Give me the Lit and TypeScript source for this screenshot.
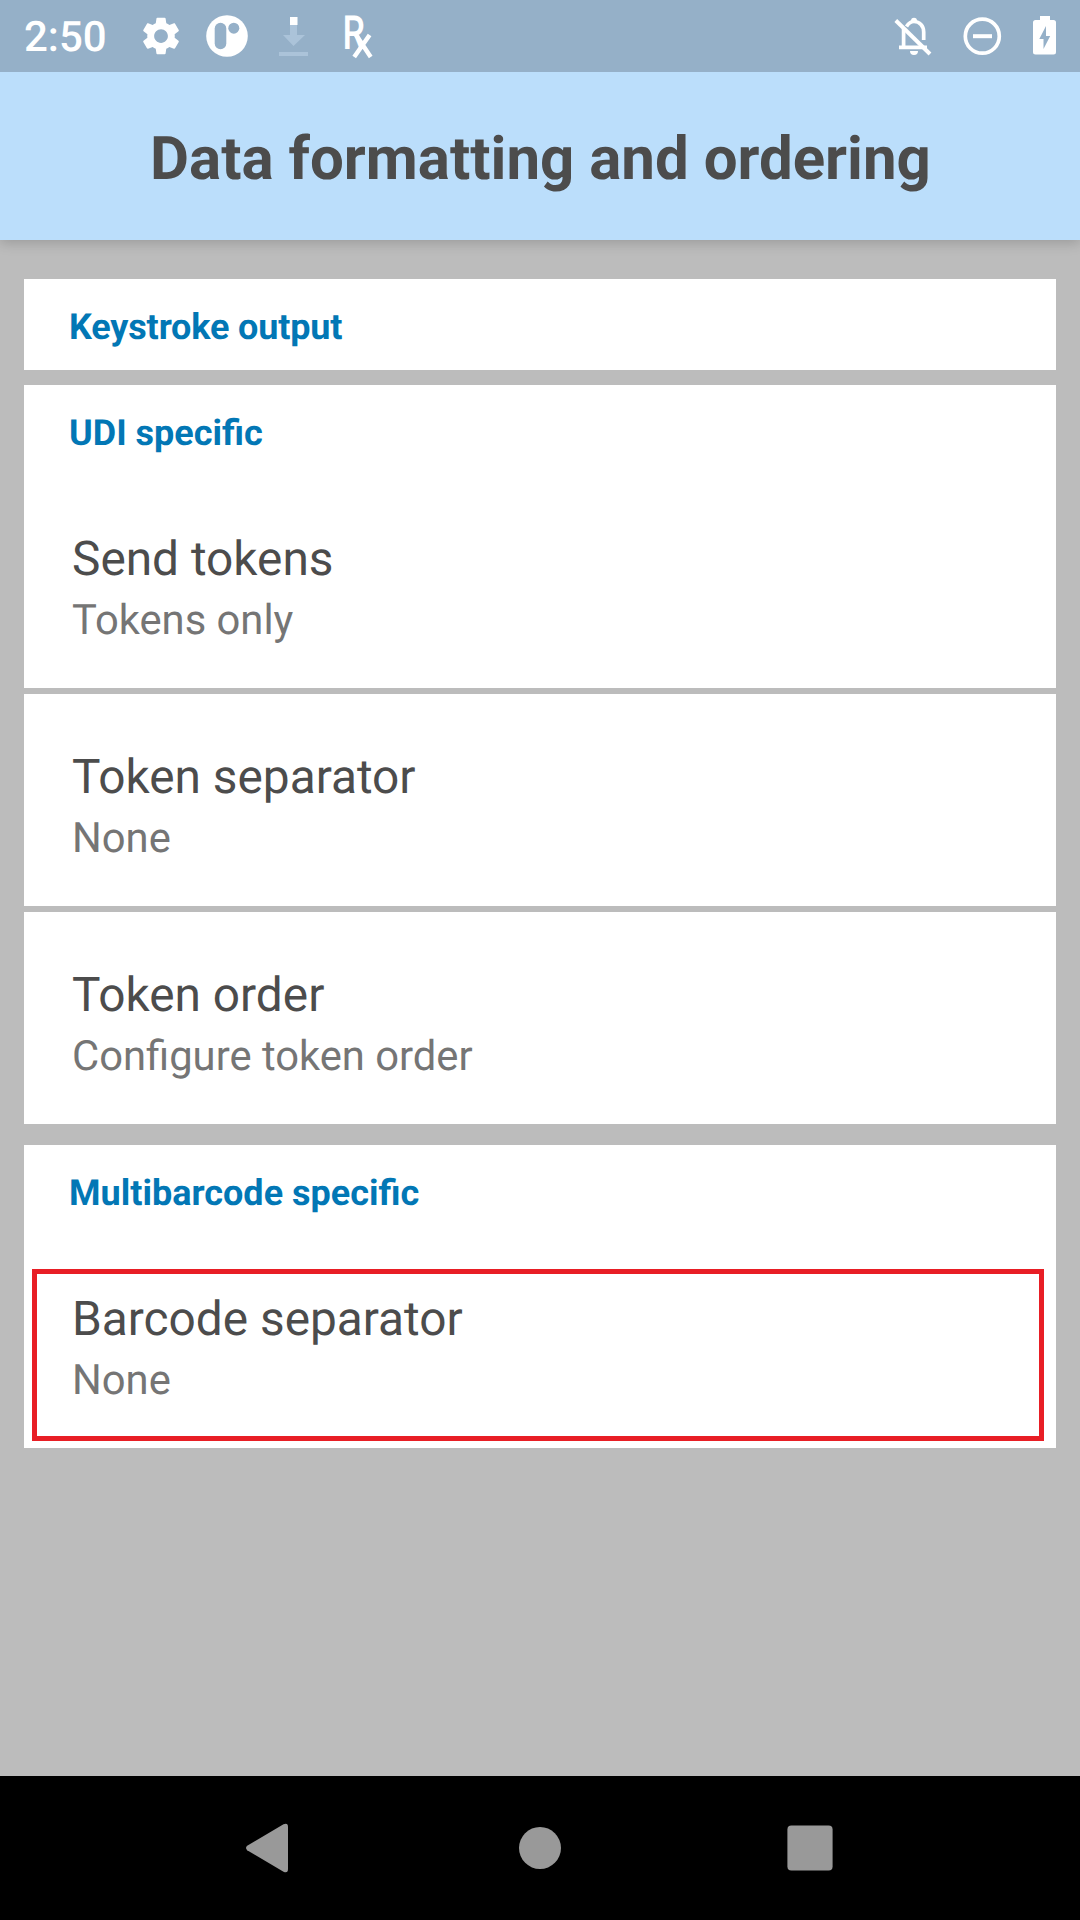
import { LitElement, html, css, svg } from "lit";
import { customElement, property } from "lit/decorators.js";

interface Item {
  title: string;
  value: string;
  marked?: boolean;
}

interface Section {
  heading: string;
  items: Item[];
}

const SECTIONS: Section[] = [
  { heading: "Keystroke output", items: [] },
  {
    heading: "UDI specific",
    items: [
      { title: "Send tokens", value: "Tokens only" },
      { title: "Token separator", value: "None" },
      { title: "Token order", value: "Configure token order" },
    ],
  },
  {
    heading: "Multibarcode specific",
    items: [{ title: "Barcode separator", value: "None", marked: true }],
  },
];

@customElement("status-bar")
export class StatusBar extends LitElement {
  static styles = css`
    :host {
      display: flex;
      align-items: center;
      justify-content: space-between;
      position: relative;
      z-index: 1;
      height: 72px;
      background: #95b0c8;
      color: #fff;
      font: 500 42px/50px Roboto, sans-serif;
    }
    .group {
      display: flex;
      align-items: center;
    }
    .time {
      width: 110px;
      padding: 3px 0 0 24px;
    }
    svg {
      display: block;
      fill: #fff;
    }
  `;

  render() {
    return html`
      <div class="group">
        <span class="time">2:50</span>
        <svg width="266" height="72" viewBox="134 0 266 72">
          <path
            transform="translate(138.1 13.1) scale(1.91)"
            d="M19.14 12.94c.04-.3.06-.61.06-.94 0-.32-.02-.64-.07-.94l2.03-1.58c.18-.14.23-.41.12-.61l-1.92-3.32c-.12-.22-.37-.29-.59-.22l-2.39.96c-.5-.38-1.03-.7-1.62-.94l-.36-2.54c-.04-.24-.24-.41-.48-.41h-3.84c-.24 0-.43.17-.47.41l-.36 2.54c-.59.24-1.13.57-1.62.94l-2.39-.96c-.22-.08-.47 0-.59.22L2.74 8.87c-.12.21-.08.47.12.61l2.03 1.58c-.05.3-.09.63-.09.94s.02.64.07.94l-2.03 1.58c-.18.14-.23.41-.12.61l1.92 3.32c.12.22.37.29.59.22l2.39-.96c.5.38 1.03.7 1.62.94l.36 2.54c.05.24.24.41.48.41h3.84c.24 0 .44-.17.47-.41l.36-2.54c.59-.24 1.13-.56 1.62-.94l2.39.96c.22.08.47 0 .59-.22l1.92-3.32c.12-.22.07-.47-.12-.61l-2.01-1.58zM12 15.6c-1.98 0-3.6-1.62-3.6-3.6s1.62-3.6 3.6-3.6 3.6 1.62 3.6 3.6-1.62 3.6-3.6 3.6z"
          />
          <circle cx="227" cy="36" r="20.8" />
          <rect x="214.7" y="22.7" width="11.6" height="26.6" rx="5.8" fill="#95b0c8" />
          <circle cx="233.8" cy="28.2" r="5.5" fill="#95b0c8" />
          <path fill="#abc3d9" d="M290 25h7v10h8L293.5 46 283 35h7zM279 52h29v4h-29z" />
          <rect x="290" y="17" width="7.5" height="8" />
          <text transform="translate(342.6 48.5) scale(.76 1)" font-size="47">R</text>
          <g fill="none" stroke="#fff" stroke-width="4.4">
            <path d="M355.5 34L370.700 57M369.600 35L354.200 57" />
          </g>
        </svg>
      </div>
      <svg width="220" height="72" viewBox="860 0 220 72">
        <g fill="none" stroke="#fff" stroke-width="3.7">
          <path d="M903.6 29v17M899 47.3h28M906.5 26.5c2.2-3.5 5-5 7.5-5 5.6 0 9.7 4.5 9.7 10.5v8" />
          <path d="M895.8 20.5L930 54" stroke-width="3.9" />
          <circle cx="982.3" cy="36.2" r="17" />
        </g>
        <path d="M911 22v-1.3a3 3 0 0 1 6 0V22zM910 51h8a4 4 0 0 1-8 0z" />
        <rect x="973" y="34.2" width="19" height="4" />
        <path
          fill-rule="evenodd"
          d="M1040 16h10v4h3.5a2.5 2.5 0 0 1 2.5 2.5v29.500a2.500 2.500 0 0 1-2.500 2.500h-18a2.500 2.500 0 0 1-2.500-2.500V22.500a2.500 2.500 0 0 1 2.500-2.500h4.500zM1046 26l-6.700 13h4.200v10l6.700-13h-4.200z"
        />
      </svg>
    `;
  }
}

@customElement("settings-row")
export class SettingsRow extends LitElement {
  @property({ attribute: false }) item!: Item;

  static styles = css`
    :host {
      display: block;
      position: relative;
      box-sizing: border-box;
      height: 212px;
      padding: 55px 48px 0;
      background: #fff;
    }
    .title {
      color: #4c4c4c;
      font-size: 47.8px;
      line-height: 56px;
    }
    .value {
      margin-top: 9px;
      color: #757575;
      font-size: 41.75px;
      line-height: 50px;
    }
    .marker {
      position: absolute;
      inset: 33px 12px 7px 8px;
      border: 5px solid #e81e25;
    }
  `;

  render() {
    return html`
      <div class="title">${this.item.title}</div>
      <div class="value">${this.item.value}</div>
      ${this.item.marked ? html`<div class="marker"></div>` : null}
    `;
  }
}

@customElement("nav-bar")
export class NavBar extends LitElement {
  static styles = css`
    :host {
      display: flex;
      justify-content: center;
      height: 144px;
      background: #000;
    }
    .key {
      display: flex;
      align-items: center;
      justify-content: center;
      width: 270px;
    }
    svg {
      fill: #999;
    }
  `;

  render() {
    const shapes = [
      svg`<path d="M13.2 33.8L49.5 12.3Q54 10.5 54 15V57Q54 61.5 49.5 59.7L13.2 38.2Q10.8 36 13.2 33.8z" />`,
      svg`<circle cx="36" cy="36" r="21" />`,
      svg`<rect x="13.4" y="13.4" width="45.2" height="45.2" rx="4" />`,
    ];
    return html`${shapes.map(
      (s) => html`<div class="key"><svg width="72" height="72" viewBox="0 0 72 72">${s}</svg></div>`
    )}`;
  }
}

@customElement("app-root")
export class AppRoot extends LitElement {
  static styles = css`
    :host {
      display: flex;
      flex-direction: column;
      height: 1920px;
      overflow: hidden;
      background: #bcbcbc;
      font-family: Roboto, sans-serif;
      text-rendering: geometricPrecision;
    }
    .bar {
      display: flex;
      align-items: center;
      justify-content: center;
      box-sizing: border-box;
      height: 168px;
      padding: 5px 0 0 1px;
      background: #bbdefb;
      box-shadow: 0 3px 12px rgba(0, 0, 0, 0.18);
      color: #4c4c4c;
      font-size: 60px;
      font-weight: 700;
    }
    .content {
      flex: 1;
      padding: 39px 24px 0;
    }
    .section {
      display: flex;
      flex-direction: column;
      gap: 6px;
      margin-bottom: 15px;
    }
    .section.long {
      margin-bottom: 21px;
    }
    .heading {
      box-sizing: border-box;
      height: 91px;
      padding: 27px 45px 0;
      background: #fff;
      color: #0277b5;
      font-size: 36px;
      font-weight: 700;
      line-height: 42px;
    }
    .heading:only-child {
      letter-spacing: -0.16px;
    }
    .heading + settings-row {
      margin-top: -6px;
    }
  `;

  render() {
    return html`
      <status-bar></status-bar>
      <div class="bar">Data formatting and ordering</div>
      <div class="content">
        ${SECTIONS.map(
          (s) => html`
            <div class="section ${s.items.length ? "long" : ""}">
              <div class="heading">${s.heading}</div>
              ${s.items.map((i) => html`<settings-row .item=${i}></settings-row>`)}
            </div>
          `
        )}
      </div>
      <nav-bar></nav-bar>
    `;
  }
}
